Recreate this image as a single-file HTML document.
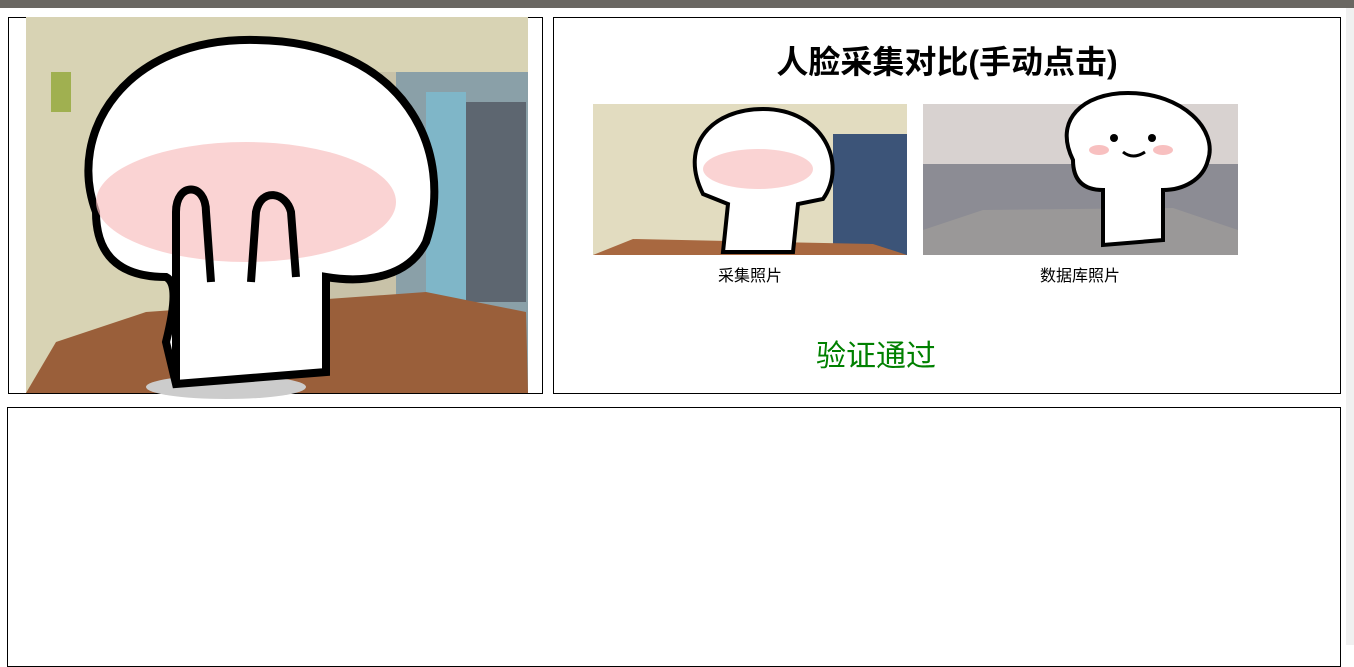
<!DOCTYPE html>
<html><head><meta charset="utf-8"><style>
body{margin:0;width:1354px;height:645px;overflow:hidden;background:#fff;position:relative;font-family:"Liberation Sans","Noto Sans CJK SC",sans-serif}
.b{position:absolute;border:1px solid #000;box-sizing:border-box}
.t{position:absolute;white-space:nowrap}
</style></head><body>
<div style="position:absolute;left:0;top:0;width:1354px;height:8px;background:#6a6762"></div>
<div style="position:absolute;right:0;top:8px;width:8px;height:637px;background:#f0f0f0"></div>
<div class="b" style="left:8px;top:17px;width:535px;height:377px"></div>
<svg style="position:absolute;left:26px;top:12px" width="504" height="405" viewBox="0 0 504 405">
<rect x="0" y="5" width="502" height="376" fill="#d8d3b4"/>
<rect x="360" y="60" width="142" height="320" fill="#8aa0a8"/>
<rect x="400" y="80" width="40" height="300" fill="#7fb6c8"/>
<rect x="440" y="90" width="60" height="200" fill="#5d6670"/>
<rect x="300" y="60" width="70" height="250" fill="#c8c2a8"/>
<path d="M0 381 L30 330 L120 300 L400 280 L500 300 L502 381 Z" fill="#9a5f3a"/>
<rect x="25" y="60" width="20" height="40" fill="#a0b050"/>
<ellipse cx="200" cy="375" rx="80" ry="12" fill="#ccc"/>
<path d="M70 200 C40 120 100 25 230 28 C380 30 430 140 400 230 C380 270 330 270 300 265 L300 360 L150 372 L140 330 C150 290 150 270 140 265 C90 265 70 240 70 200 Z" fill="#fff" stroke="#000" stroke-width="8"/>
<ellipse cx="220" cy="190" rx="150" ry="60" fill="#f8c0c0" opacity=".7"/>
<path d="M150 370 L150 200 C150 170 180 170 180 200 L185 270 M225 270 L230 200 C235 175 260 180 265 200 L270 265" fill="none" stroke="#000" stroke-width="8"/>
</svg>
<div class="b" style="left:553px;top:17px;width:788px;height:377px"></div>
<div class="t" style="left:553px;width:788px;text-align:center;top:42px;font-size:32px;font-weight:bold;line-height:40px">人脸采集对比(手动点击)</div>
<svg style="position:absolute;left:593px;top:104px" width="314" height="151" viewBox="0 0 314 151">
<rect width="314" height="151" fill="#e2dcc0"/>
<rect x="240" y="30" width="74" height="121" fill="#3c5478"/>
<path d="M0 151 L40 135 L280 140 L314 151Z" fill="#a86840"/>
<path d="M110 90 C85 40 120 5 170 5 C230 5 255 60 230 95 L205 100 L200 148 L130 148 L135 100 Z" fill="#fff" stroke="#000" stroke-width="4"/>
<ellipse cx="165" cy="65" rx="55" ry="20" fill="#f8c0c0" opacity=".7"/>
</svg>
<svg style="position:absolute;left:923px;top:90px" width="315" height="165" viewBox="0 0 315 165">
<rect y="14" width="315" height="151" fill="#8c8c94"/>
<rect y="14" width="315" height="60" fill="#d8d2d0"/>
<path d="M0 165 L0 140 L60 120 L250 118 L315 140 L315 165Z" fill="#9a9898"/>
<path d="M150 70 C130 30 160 3 205 3 C260 3 295 40 285 70 C280 90 260 100 240 100 L240 150 L180 155 L180 100 C160 100 150 90 150 70 Z" fill="#fff" stroke="#000" stroke-width="4"/>
<circle cx="191" cy="48" r="4"/><circle cx="229" cy="48" r="4"/>
<path d="M200 62 Q210 70 222 62" fill="none" stroke="#000" stroke-width="3"/>
<ellipse cx="176" cy="60" rx="10" ry="5" fill="#f8c0c0"/><ellipse cx="240" cy="60" rx="10" ry="5" fill="#f8c0c0"/>
</svg>
<div class="t" style="left:718px;top:262px;font-size:16px">采集照片</div>
<div class="t" style="left:1040px;top:262px;font-size:16px">数据库照片</div>
<div class="t" style="left:816px;top:331px;font-size:30px;color:#008000">验证通过</div>
<div class="b" style="left:7px;top:407px;width:1334px;height:260px"></div>
</body></html>
